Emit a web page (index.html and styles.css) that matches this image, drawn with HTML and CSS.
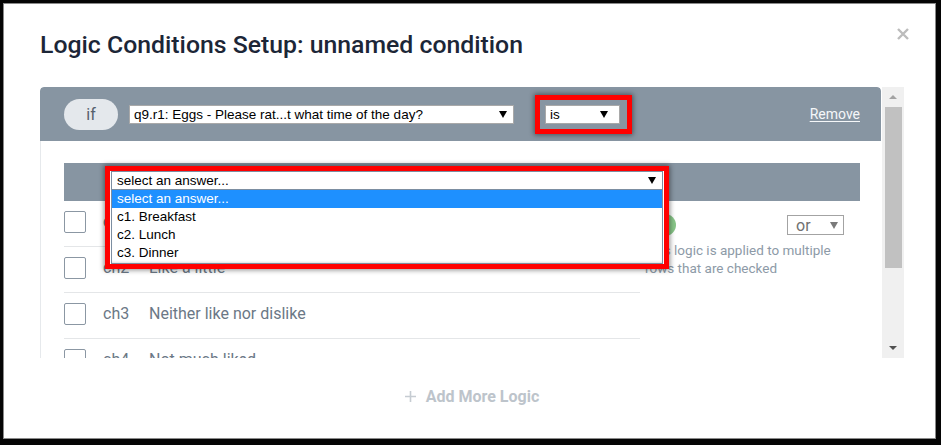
FILE: index.html
```html
<!DOCTYPE html>
<html lang="en">
<head>
<meta charset="utf-8">
<title>Logic Conditions Setup</title>
<link rel="stylesheet" href="styles.css">
</head>
<body>
<div class="frame">
  <div class="modal">
    <header class="modal-head">
      <h1 class="modal-title">Logic Conditions Setup: unnamed condition</h1>
      <button class="close" type="button" aria-label="Close">
        <svg width="12" height="12" viewBox="0 0 12 12"><path d="M1 1L11 11M11 1L1 11" stroke="#bcbcbc" stroke-width="2.4"/></svg>
      </button>
    </header>

    <div class="viewport">
      <div class="pane">
        <div class="cond-head">
          <span class="if-pill">if</span>
          <div class="sel sel-question"><span class="sel-text">q9.r1: Eggs - Please rat...t what time of the day?</span><span class="caret"></span></div>
          <div class="mark mark-op">
            <div class="sel sel-op"><span class="sel-text">is</span><span class="caret"></span></div>
          </div>
          <a class="remove" href="#">Remove</a>
        </div>

        <div class="cond-body">
          <div class="answer-bar">
            <div class="mark answer-menu">
              <div class="sel sel-answer"><span class="sel-text">select an answer...</span><span class="caret"></span></div>
              <ul class="options">
                <li class="is-active">select an answer...</li>
                <li>c1. Breakfast</li>
                <li>c2. Lunch</li>
                <li>c3. Dinner</li>
              </ul>
            </div>
          </div>

          <div class="grid">
            <div class="rows">
              <div class="row"><span class="box"></span><span class="code">ch1</span><span class="label">Like a lot</span></div>
              <div class="row"><span class="box"></span><span class="code">ch2</span><span class="label">Like a little</span></div>
              <div class="row"><span class="box"></span><span class="code">ch3</span><span class="label">Neither like nor dislike</span></div>
              <div class="row"><span class="box"></span><span class="code">ch4</span><span class="label">Not much liked</span></div>
              <div class="row"><span class="box"></span><span class="code">ch5</span><span class="label">Not at all liked</span></div>
            </div>
            <div class="logic">
              <div class="logic-top">
                <span class="dot"></span>
                <div class="sel-or"><span>or</span><span class="caret caret-grey"></span></div>
              </div>
              <p class="logic-note">This logic is applied to multiple rows that are checked</p>
            </div>
          </div>
        </div>
      </div>

      <div class="scrollbar" aria-hidden="true">
        <div class="sb-btn"><span class="sb-up"></span></div>
        <div class="sb-thumb"></div>
        <div class="sb-fill"></div>
        <div class="sb-btn"><span class="sb-down"></span></div>
      </div>
    </div>

    <div class="add-more">
      <svg class="plus" width="11" height="11" viewBox="0 0 11 11"><path d="M5.5 0V11M0 5.5H11" stroke="#c6ccd2" stroke-width="1.6"/></svg>
      <span>Add More Logic</span>
    </div>
  </div>
</div>
</body>
</html>
```

FILE: styles.css
```css
html, body {
  margin: 0;
  padding: 0;
  background: #ffffff;
}

body {
  font-family: Roboto, "Liberation Sans", Arial, sans-serif;
}

/* outer window frame */
.frame {
  box-sizing: border-box;
  width: 941px;
  height: 445px;
  border-style: solid;
  border-color: #050505;
  border-width: 3px 5px 6px 3px;
  box-shadow: inset 0 0 0 1px #8a8a8a;
  background: #ffffff;
  overflow: hidden;
}

.modal {
  padding: 28px 27px 0 37px;
}

/* title row */
.modal-head {
  display: flex;
  align-items: flex-start;
}

.modal-title {
  flex: 1;
  margin: 0;
  font-family: Roboto, sans-serif;
  font-weight: 500;
  font-size: 24.8px;
  line-height: 28px;
  color: #1c2637;
}

.close {
  margin: -3px 0 0 0;
  padding: 0;
  border: 0;
  background: none;
  width: 12px;
  height: 12px;
  line-height: 0;
}

/* scrolling condition area */
.viewport {
  display: flex;
  gap: 1px;
  height: 271px;
  margin: 28px 5px 0 0;
}

.pane {
  flex: 1;
  overflow: hidden;
  border-radius: 4px 4px 0 0;
}

.cond-head {
  display: flex;
  align-items: center;
  height: 54px;
  padding: 0 21px 0 24px;
  background: #8795a2;
  border-radius: 4px 4px 0 0;
}

.if-pill {
  width: 54px;
  height: 31px;
  border-radius: 16px;
  background: #e4e8ec;
  color: #56616d;
  font-size: 16px;
  line-height: 31px;
  text-align: center;
  margin-right: 11px;
}

/* native-looking select faces */
.sel {
  box-sizing: border-box;
  display: flex;
  align-items: center;
  height: 19px;
  background: #ffffff;
  border: 1px solid #a9a9a9;
  font-family: "Liberation Sans", Arial, sans-serif;
  font-size: 13.5px;
  color: #000000;
  padding: 0 6px 0 4px;
}

.sel-text {
  flex: 1;
  white-space: nowrap;
  overflow: hidden;
}

.caret {
  width: 0;
  height: 0;
  border-left: 4px solid transparent;
  border-right: 4px solid transparent;
  border-top: 7px solid #000000;
}

.caret-grey {
  border-top: 7px solid #7a7a7a;
}

.sel-question {
  width: 385px;
}

/* red highlight marks */
.mark {
  box-sizing: border-box;
  border: 5px solid #ff0000;
  box-shadow: 0 0 5px 1px rgba(0, 0, 0, 0.45);
}

.mark-op {
  display: flex;
  align-items: center;
  width: 97px;
  height: 39px;
  margin-left: 21px;
  padding-left: 5px;
}

.sel-op {
  width: 75px;
  padding-right: 11px;
}

.remove {
  margin-left: auto;
  color: #f5f7f9;
  font-size: 14px;
  text-decoration: underline;
  text-underline-offset: 2px;
}

/* condition body */
.cond-body {
  border-left: 1px solid #e6e9ec;
  padding: 22px 21px 0 23px;
}

.answer-bar {
  position: relative;
  height: 38px;
  background: #8795a2;
}

.answer-menu {
  position: absolute;
  left: 41px;
  top: 3px;
  z-index: 2;
  width: 564px;
  padding: 0 1px;
  background: #ffffff;
}

.sel-answer {
  border-color: #7c8ea1;
  padding: 0 6px 0 5px;
}

.options {
  margin: 0;
  padding: 0;
  list-style: none;
  background: #ffffff;
  border: 1px solid #7c8ea1;
  border-top: 0;
  box-shadow: inset 0 -2px 3px -2px rgba(0, 0, 0, 0.25);
}

.options li {
  height: 18px;
  line-height: 18px;
  padding-left: 5px;
  font-family: "Liberation Sans", Arial, sans-serif;
  font-size: 13.5px;
  color: #000000;
}

.options li:last-child {
  height: 19px;
}

.options .is-active {
  background: #1e90ff;
  color: #ffffff;
}

.grid {
  display: grid;
  grid-template-columns: 576px 1fr;
}

.row {
  display: flex;
  align-items: flex-start;
  box-sizing: border-box;
  height: 46px;
  padding-top: 10px;
  border-bottom: 1px solid #e4e6e8;
}

.box {
  box-sizing: border-box;
  width: 22px;
  height: 22px;
  border: 1px solid #8b97a3;
  border-radius: 2px;
  background: #ffffff;
  margin-right: 17px;
}

.code,
.label {
  font-size: 16px;
  line-height: 22px;
  color: #6b7886;
}

.code {
  width: 46px;
}

.logic {
  padding: 13px 16px 0 5px;
}

.logic-top {
  display: flex;
  align-items: center;
}

.dot {
  width: 22px;
  height: 22px;
  border-radius: 50%;
  background: #88c588;
  margin-left: 9px;
}

.sel-or {
  box-sizing: border-box;
  display: flex;
  align-items: center;
  justify-content: space-between;
  margin-left: auto;
  width: 57px;
  height: 20px;
  padding: 0 5px 0 8px;
  border: 1px solid #a3a3a3;
  font-size: 16px;
  color: #717171;
}

.logic-note {
  margin: 5px 0 0 0;
  width: 196px;
  font-size: 13.5px;
  line-height: 18px;
  color: #8d9aa7;
}

/* drawn scrollbar */
.scrollbar {
  display: flex;
  flex-direction: column;
  width: 22px;
  background: #f0f0f0;
}

.sb-btn {
  height: 20px;
  display: flex;
  align-items: center;
  justify-content: center;
}

.sb-up {
  width: 0;
  height: 0;
  border-left: 4px solid transparent;
  border-right: 4px solid transparent;
  border-bottom: 4px solid #a3a3a3;
}

.sb-down {
  width: 0;
  height: 0;
  border-left: 4px solid transparent;
  border-right: 4px solid transparent;
  border-top: 4px solid #505050;
}

.sb-thumb {
  height: 161px;
  margin: 0 2px 0 3px;
  background: #c1c1c1;
}

.sb-fill {
  flex: 1;
}

/* footer action */
.add-more {
  display: flex;
  align-items: center;
  justify-content: center;
  gap: 10px;
  margin: 28px 5px 0 0;
  height: 20px;
  font-size: 16px;
  font-weight: 700;
  color: #bdc4cb;
}
```
